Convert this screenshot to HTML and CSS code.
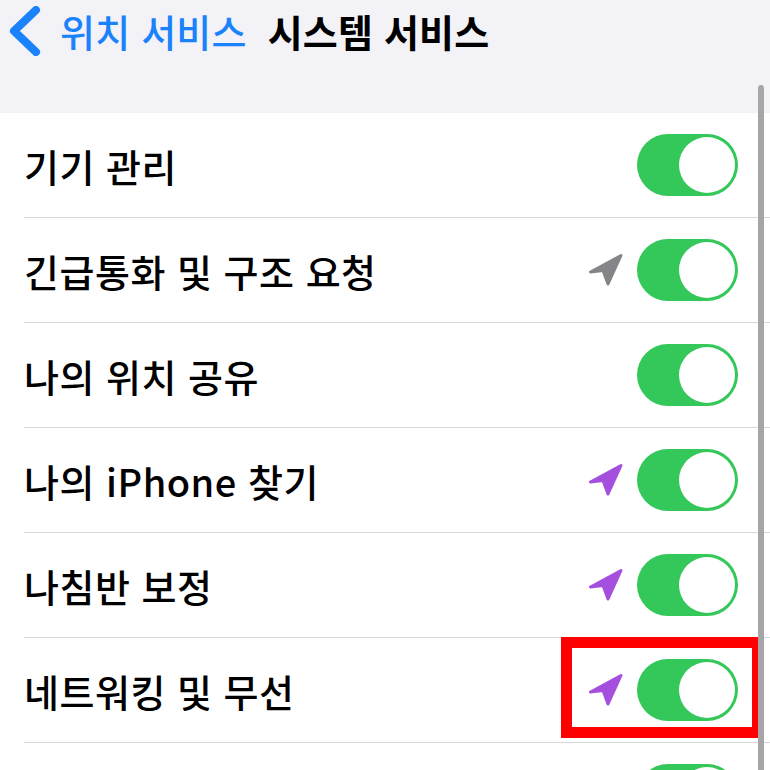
FILE: index.html
```html
<!DOCTYPE html>
<html lang="ko">
<head>
  <meta charset="UTF-8" />
  <meta name="viewport" content="width=device-width, initial-scale=1.0"/>
  <title>시스템 서비스</title>
  <link rel="stylesheet" href="styles.css">
</head>
<body>
  <div class="screen">
    <header class="nav">
      <a class="back" href="#">
        <svg class="chevron" viewBox="0 0 32 50" width="32" height="50">
          <path d="M27 4 L5 25 L27 46" fill="none" stroke="#1a82fb" stroke-width="8" stroke-linecap="round" stroke-linejoin="round"/>
        </svg>
        <span class="back-label">위치 서비스</span>
      </a>
      <h1 class="title">시스템 서비스</h1>
    </header>

    <ul class="list">
      <li class="row">
        <div class="row-inner">
          <span class="label">기기 관리</span>
          <span class="toggle"><span class="knob"></span></span>
        </div>
      </li>
      <li class="row">
        <div class="row-inner">
          <span class="label">긴급통화 및 구조 요청</span>
          <svg class="arrow gray" viewBox="0 0 34 32" width="34" height="32"><path d="M32 1.5 L1.5 18 L14 16.5 L19 30 Z"/></svg>
          <span class="toggle"><span class="knob"></span></span>
        </div>
      </li>
      <li class="row">
        <div class="row-inner">
          <span class="label">나의 위치 공유</span>
          <span class="toggle"><span class="knob"></span></span>
        </div>
      </li>
      <li class="row">
        <div class="row-inner">
          <span class="label">나의 iPhone 찾기</span>
          <svg class="arrow purple" viewBox="0 0 34 32" width="34" height="32"><path d="M32 1.5 L1.5 18 L14 16.5 L19 30 Z"/></svg>
          <span class="toggle"><span class="knob"></span></span>
        </div>
      </li>
      <li class="row">
        <div class="row-inner">
          <span class="label">나침반 보정</span>
          <svg class="arrow purple" viewBox="0 0 34 32" width="34" height="32"><path d="M32 1.5 L1.5 18 L14 16.5 L19 30 Z"/></svg>
          <span class="toggle"><span class="knob"></span></span>
        </div>
      </li>
      <li class="row marked">
        <div class="row-inner">
          <span class="label">네트워킹 및 무선</span>
          <svg class="arrow purple" viewBox="0 0 34 32" width="34" height="32"><path d="M32 1.5 L1.5 18 L14 16.5 L19 30 Z"/></svg>
          <span class="toggle"><span class="knob"></span></span>
        </div>
        <div class="highlight"></div>
      </li>
      <li class="row">
        <div class="row-inner">
          <span class="label"></span>
          <span class="toggle"><span class="knob"></span></span>
        </div>
      </li>
    </ul>

    <div class="scrollbar"></div>
  </div>
</body>
</html>
```

FILE: styles.css
```css
* {
  box-sizing: border-box;
}
body {
  margin: 0;
  background: #f2f2f7;
  font-family: "Noto Sans CJK KR", "Noto Sans", sans-serif;
  overflow: hidden;
}
.screen {
  position: relative;
  width: 770px;
  height: 770px;
  overflow: hidden;
}
.nav {
  display: flex;
  align-items: center;
  height: 60px;
  padding-left: 9px;
}
.back {
  display: flex;
  align-items: center;
  gap: 19px;
  color: #1a82fb;
  text-decoration: none;
  margin-right: 21px;
}
.chevron {
  display: block;
  margin-top: 2px;
}
.back-label {
  font-size: 38px;
  font-weight: 500;
  letter-spacing: 0.2px;
}
.title {
  margin: 0;
  font-size: 38px;
  font-weight: 700;
  color: #000;
  letter-spacing: 0.2px;
}
.list {
  list-style: none;
  margin: 53px 0 0;
  padding: 0;
  background: #fff;
}
.row {
  position: relative;
  padding-left: 24px;
}
.row-inner {
  display: flex;
  align-items: center;
  height: 105px;
  padding-right: 32px;
  border-bottom: 1px solid #d8d8dc;
}
.label {
  flex: 1;
  font-size: 38px;
  font-weight: 500;
  color: #000;
  letter-spacing: 0.5px;
}
.arrow {
  display: block;
  margin-right: 14px;
}
.arrow path {
  stroke-width: 3;
  stroke-linejoin: round;
}
.arrow.gray path {
  fill: #858589;
  stroke: #858589;
}
.arrow.purple path {
  fill: #a54fde;
  stroke: #a54fde;
}
.toggle {
  position: relative;
  display: block;
  width: 101px;
  height: 62px;
  border-radius: 31px;
  background: #34c759;
}
.knob {
  position: absolute;
  top: 3px;
  right: 3px;
  width: 56px;
  height: 56px;
  border-radius: 50%;
  background: #fff;
}
.highlight {
  position: absolute;
  left: 561px;
  top: -1px;
  width: 202px;
  height: 101px;
  border: 11px solid #ff0000;
}
.scrollbar {
  position: absolute;
  left: 758px;
  top: 85px;
  width: 6px;
  height: 700px;
  border-radius: 3px;
  background: #a6a6a8;
}
```
